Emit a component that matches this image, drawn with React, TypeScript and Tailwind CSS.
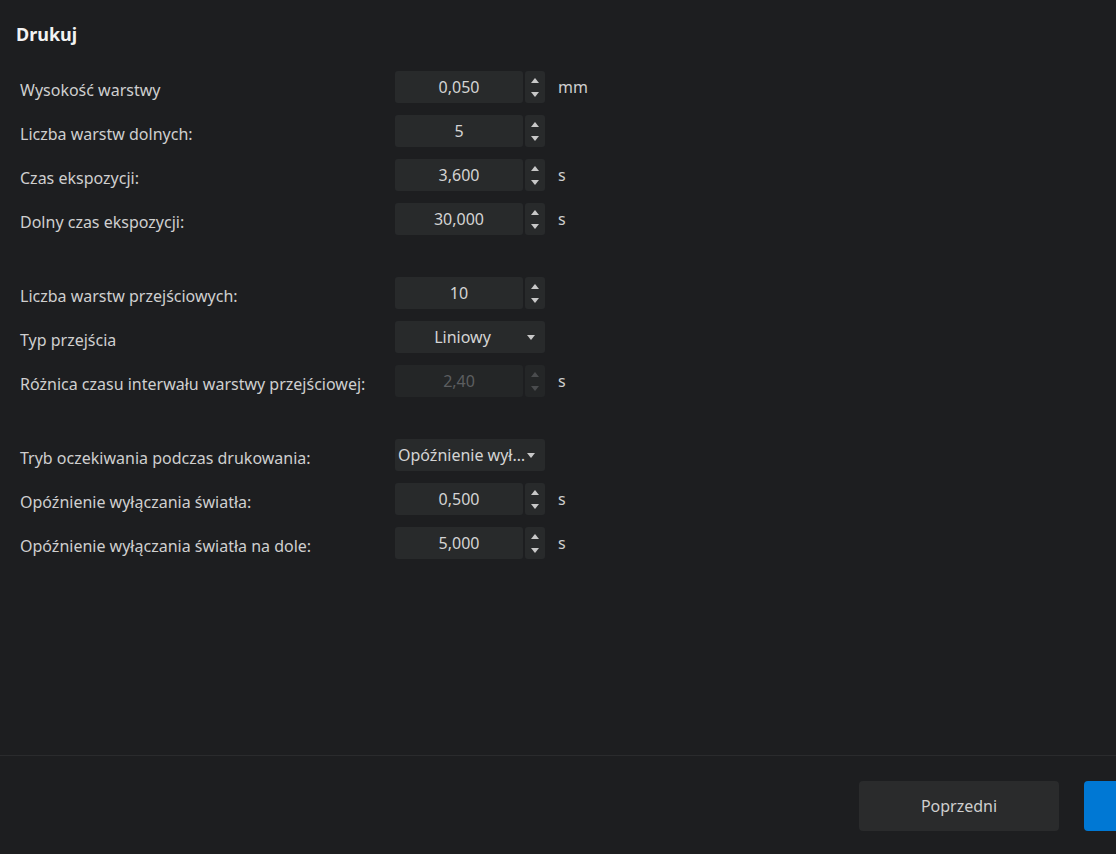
import { ReactNode } from "react";

type Row =
  | { kind: "spin"; label: string; value: string; unit?: string; disabled?: boolean }
  | { kind: "select"; label: string; value: string };

const groups: Row[][] = [
  [
    { kind: "spin", label: "Wysokość warstwy", value: "0,050", unit: "mm" },
    { kind: "spin", label: "Liczba warstw dolnych:", value: "5" },
    { kind: "spin", label: "Czas ekspozycji:", value: "3,600", unit: "s" },
    { kind: "spin", label: "Dolny czas ekspozycji:", value: "30,000", unit: "s" },
  ],
  [
    { kind: "spin", label: "Liczba warstw przejściowych:", value: "10" },
    { kind: "select", label: "Typ przejścia", value: "Liniowy" },
    { kind: "spin", label: "Różnica czasu interwału warstwy przejściowej:", value: "2,40", unit: "s", disabled: true },
  ],
  [
    { kind: "select", label: "Tryb oczekiwania podczas drukowania:", value: "Opóźnienie wyłączania światła" },
    { kind: "spin", label: "Opóźnienie wyłączania światła:", value: "0,500", unit: "s" },
    { kind: "spin", label: "Opóźnienie wyłączania światła na dole:", value: "5,000", unit: "s" },
  ],
];

function Caret({ up, dim }: { up?: boolean; dim?: boolean }) {
  return (
    <svg width="8" height="5" viewBox="0 0 8 5" className={dim ? "text-[#4a4c4e]" : "text-[#c8c8c8]"}>
      <path d={up ? "M0 5 L4 0 L8 5 Z" : "M0 0 L8 0 L4 5 Z"} fill="currentColor" />
    </svg>
  );
}

function Field({ row }: { row: Row }): ReactNode {
  if (row.kind === "select") {
    return (
      <div className="flex h-8 w-[150px] items-center rounded-[3px] bg-[#282a2b] pl-[3px] pr-[10px]">
        <span className="min-w-0 flex-1 truncate text-center text-[#d4d4d4]">{row.value}</span>
        <Caret />
      </div>
    );
  }
  return (
    <div className="flex items-center">
      <div
        className={`flex h-8 w-[128px] items-center justify-center rounded-[3px] ${
          row.disabled ? "bg-[#242627] text-[#5c5e60]" : "bg-[#282a2b] text-[#d4d4d4]"
        }`}
      >
        {row.value}
      </div>
      <div
        className={`ml-[2px] flex h-8 w-5 flex-col items-center justify-center gap-[9px] rounded-[3px] ${
          row.disabled ? "bg-[#242627]" : "bg-[#282a2b]"
        }`}
      >
        <Caret up dim={row.disabled} />
        <Caret dim={row.disabled} />
      </div>
      {row.unit && <span className="ml-[13px] text-[#cfcfcf]">{row.unit}</span>}
    </div>
  );
}

export default function App() {
  return (
    <div
      className="flex h-[854px] w-[1116px] flex-col overflow-hidden bg-[#1d1e20] text-[16px]"
      style={{ fontFamily: '"Noto Sans", "Open Sans", sans-serif' }}
    >
      <div className="flex-1 px-4 pt-[20px]">
        <h1 className="text-[18px] font-bold leading-[28px] text-[#f2f2f2]">Drukuj</h1>
        <div className="mt-[23px] flex flex-col gap-[42px]">
          {groups.map((g, gi) => (
            <div key={gi} className="flex flex-col gap-3">
              {g.map((row) => (
                <div key={row.label} className="flex items-center">
                  <span className="w-[379px] pl-1 pt-[6px] text-[#cfcfcf]">{row.label}</span>
                  <Field row={row} />
                </div>
              ))}
            </div>
          ))}
        </div>
      </div>
      <div className="flex h-[99px] items-center justify-end gap-[25px] border-t border-[#2a2b2d] pt-[2px]">
        <button className="h-[50px] w-[200px] shrink-0 rounded-[4px] bg-[#2a2b2c] text-[#cfcfcf]">Poprzedni</button>
        <button className="mr-[-168px] h-[50px] w-[200px] shrink-0 rounded-[4px] bg-[#0078d4]" />
      </div>
    </div>
  );
}
